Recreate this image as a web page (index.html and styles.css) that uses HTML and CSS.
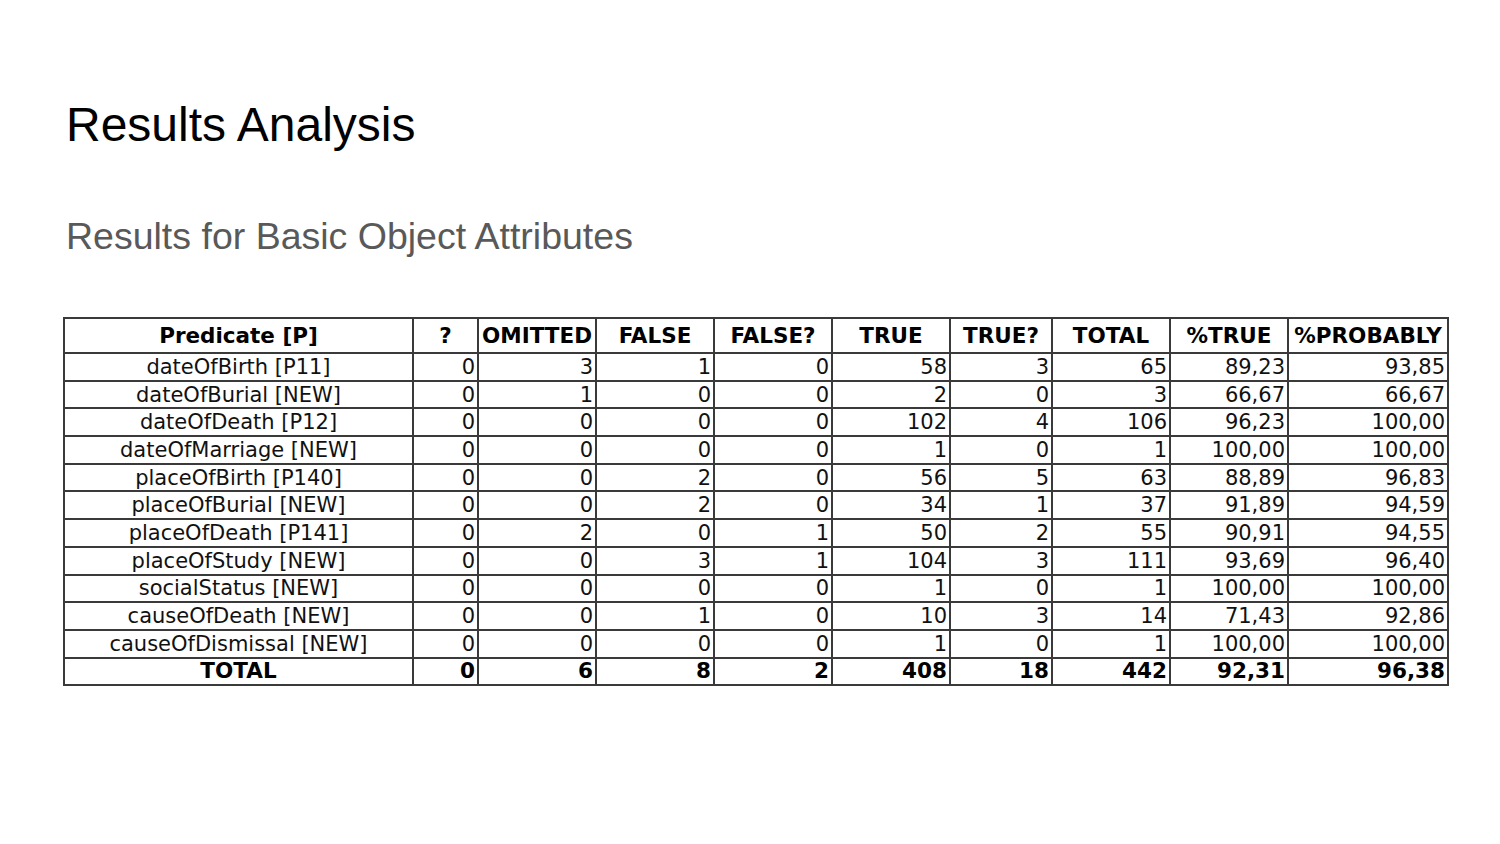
FILE: index.html
```html
<!DOCTYPE html>
<html>
<head>
<meta charset="utf-8">
<link rel="stylesheet" href="styles.css">
</head>
<body>
<div class="slide">
  <h1 class="title">Results Analysis</h1>
  <h2 class="subtitle">Results for Basic Object Attributes</h2>
  <table class="results">
    <colgroup>
      <col class="c-pred"><col class="c-q"><col class="c-w"><col class="c-w"><col class="c-w"><col class="c-w"><col class="c-tq"><col class="c-w"><col class="c-w"><col class="c-prob">
    </colgroup>
    <thead>
      <tr><th>Predicate [P]</th><th>?</th><th>OMITTED</th><th>FALSE</th><th>FALSE?</th><th>TRUE</th><th>TRUE?</th><th>TOTAL</th><th>%TRUE</th><th>%PROBABLY</th></tr>
    </thead>
    <tbody>
      <tr><td class="name">dateOfBirth [P11]</td><td>0</td><td>3</td><td>1</td><td>0</td><td>58</td><td>3</td><td>65</td><td>89,23</td><td>93,85</td></tr>
      <tr><td class="name">dateOfBurial [NEW]</td><td>0</td><td>1</td><td>0</td><td>0</td><td>2</td><td>0</td><td>3</td><td>66,67</td><td>66,67</td></tr>
      <tr><td class="name">dateOfDeath [P12]</td><td>0</td><td>0</td><td>0</td><td>0</td><td>102</td><td>4</td><td>106</td><td>96,23</td><td>100,00</td></tr>
      <tr><td class="name">dateOfMarriage [NEW]</td><td>0</td><td>0</td><td>0</td><td>0</td><td>1</td><td>0</td><td>1</td><td>100,00</td><td>100,00</td></tr>
      <tr><td class="name">placeOfBirth [P140]</td><td>0</td><td>0</td><td>2</td><td>0</td><td>56</td><td>5</td><td>63</td><td>88,89</td><td>96,83</td></tr>
      <tr><td class="name">placeOfBurial [NEW]</td><td>0</td><td>0</td><td>2</td><td>0</td><td>34</td><td>1</td><td>37</td><td>91,89</td><td>94,59</td></tr>
      <tr><td class="name">placeOfDeath [P141]</td><td>0</td><td>2</td><td>0</td><td>1</td><td>50</td><td>2</td><td>55</td><td>90,91</td><td>94,55</td></tr>
      <tr><td class="name">placeOfStudy [NEW]</td><td>0</td><td>0</td><td>3</td><td>1</td><td>104</td><td>3</td><td>111</td><td>93,69</td><td>96,40</td></tr>
      <tr><td class="name">socialStatus [NEW]</td><td>0</td><td>0</td><td>0</td><td>0</td><td>1</td><td>0</td><td>1</td><td>100,00</td><td>100,00</td></tr>
      <tr><td class="name">causeOfDeath [NEW]</td><td>0</td><td>0</td><td>1</td><td>0</td><td>10</td><td>3</td><td>14</td><td>71,43</td><td>92,86</td></tr>
      <tr><td class="name">causeOfDismissal [NEW]</td><td>0</td><td>0</td><td>0</td><td>0</td><td>1</td><td>0</td><td>1</td><td>100,00</td><td>100,00</td></tr>
      <tr class="total"><td class="name">TOTAL</td><td>0</td><td>6</td><td>8</td><td>2</td><td>408</td><td>18</td><td>442</td><td>92,31</td><td>96,38</td></tr>
    </tbody>
  </table>
</div>
</body>
</html>
```

FILE: styles.css
```css
html, body {
  margin: 0;
  padding: 0;
  background: #ffffff;
}

.slide {
  width: 1500px;
  height: 844px;
  box-sizing: border-box;
  padding: 97px 0 0 63px;
  overflow: hidden;
}

.title {
  margin: 0 0 0 3px;
  font-family: "Liberation Sans", Arial, sans-serif;
  font-weight: normal;
  font-size: 48px;
  line-height: 56px;
  color: #000000;
}

.subtitle {
  margin: 62px 0 0 3px;
  font-family: "Liberation Sans", Arial, sans-serif;
  font-weight: normal;
  font-size: 37.5px;
  line-height: 42px;
  color: #595959;
}

.results {
  margin-top: 60px;
  border-collapse: collapse;
  table-layout: fixed;
  width: 1385px;
  font-family: "DejaVu Sans", sans-serif;
  font-size: 21px;
  color: #111111;
}

.c-pred { width: 349px; }
.c-q { width: 65px; }
.c-w { width: 118px; }
.c-tq { width: 102px; }
.c-prob { width: 160px; }

.results th,
.results td {
  border: 2px solid #3a3a3a;
  padding: 0 2px 0 2px;
  white-space: nowrap;
  overflow: visible;
  line-height: 24px;
}

.results th {
  height: 33px;
  font-weight: bold;
  font-size: 21.5px;
  text-align: center;
  color: #000000;
}

.results td {
  height: 25.7px;
  text-align: right;
}

.results td.name {
  text-align: center;
}

.results tr.total td {
  font-weight: bold;
  font-size: 21.5px;
  color: #000000;
}
```
